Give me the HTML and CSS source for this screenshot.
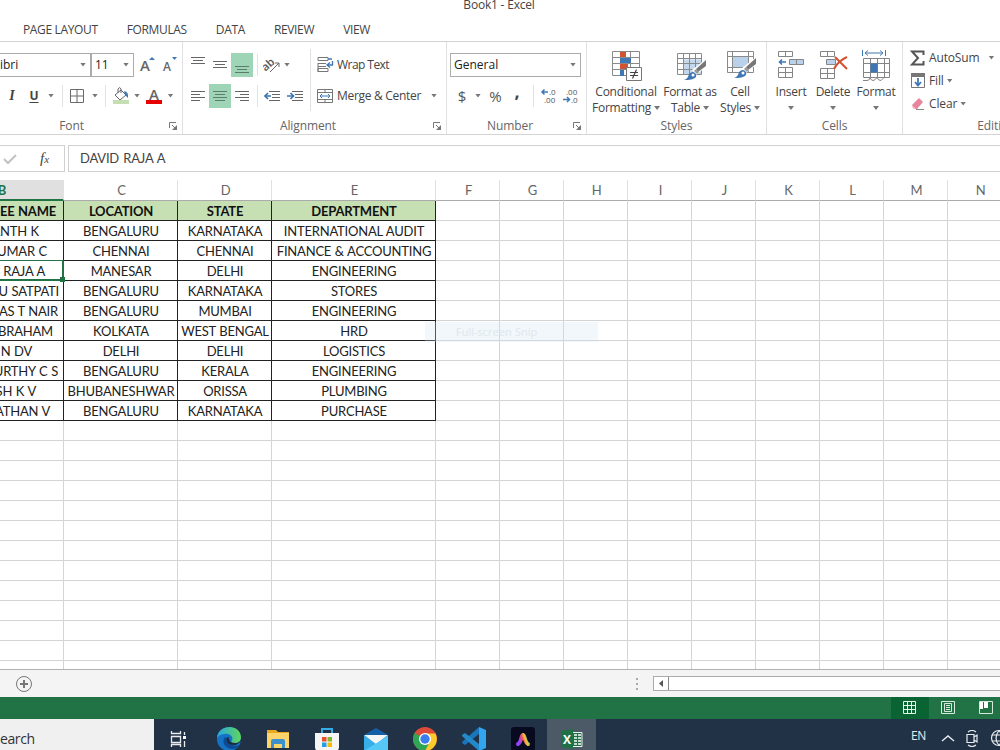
FILE: index.html
```html
<!doctype html>
<html lang="en">
  <head>
    <meta charset="utf-8">
    <title>Book1 - Excel</title>
    <link rel="stylesheet" href="styles.css">
  </head>
  <body>
    <header class="top">
      <div class="title">Book1 - Excel</div>
      <nav class="tabs">
        <span>PAGE LAYOUT</span>
        <span>FORMULAS</span>
        <span>DATA</span>
        <span>REVIEW</span>
        <span>VIEW</span>
      </nav>
    </header>

    <div class="ribbon">
      <section class="group font">
        <div class="row font-1">
          <div class="box font-name"><span>ibri</span><i class="arrow"></i></div>
          <div class="box"><span>11</span><i class="arrow"></i></div>
          <svg width="18" height="20"><text x="2" y="16" class="letter" font-size="15">A</text><path d="M11 5l3-3 3 3z" fill="#3f77b5"/></svg>
          <svg width="18" height="20"><text x="3" y="16" class="letter" font-size="12">A</text><path d="M12 2h5l-2.500 3z" fill="#3f77b5"/></svg>
        </div>
        <div class="row font-2">
          <b class="italic">I</b>
          <b class="under">U</b>
          <i class="arrow"></i>
          <i class="sep"></i>
          <svg width="14" height="14" fill="none" stroke="#6a6a6a"><path d="M.5.5h13v13H.5zM7 .5v13M.5 7h13"/></svg>
          <i class="arrow"></i>
          <i class="sep"></i>
          <svg width="18" height="18"><path d="M1 13h16v4H1z" fill="#c5dfb3"/><path d="M3 8l6-5 5 5-6 5zM6 6V2q2-3 3 0v4" fill="#fff" stroke="#666"/><path d="M12 4q5 1 4 7l-3-3z" fill="#3f77b5"/></svg>
          <i class="arrow"></i>
          <svg width="18" height="18"><text x="4" y="13" class="letter" font-size="15">A</text><path d="M1 13h16v4H1z" fill="#e60000"/></svg>
          <i class="arrow"></i>
        </div>
        <div class="caption"><span>Font</span><svg class="launch" width="9" height="9"><path d="M.5 6V.5H7M3 3l4 4" fill="none" stroke="#777"/><path d="M8 3v5H3z" fill="#777"/></svg></div>
      </section>

      <section class="group align">
        <div class="row align-1">
          <svg width="14" height="22" stroke="#666"><path d="M0 3.500h14M2 6.500h10M0 9.500h14"/></svg>
          <svg width="14" height="22" stroke="#666"><path d="M0 7.500h14M2 10.500h10M0 13.500h14"/></svg>
          <span class="on"><svg width="14" height="22" stroke="#5d7d6c"><path d="M0 12.500h14M2 15.500h10M0 18.500h14"/></svg></span>
          <i class="sep"></i>
          <svg width="18" height="18"><text x="-1" y="11" transform="rotate(-42 7 9)" font-size="11" font-family="Open Sans" font-weight="600" fill="#555">ab</text><path d="M7 16L16 7M12 7h4v4" fill="none" stroke="#666"/></svg>
          <i class="arrow"></i>
          <i></i>
          <i class="sep tall"></i>
          <svg width="17" height="17" fill="none" stroke="#777"><path d="M1 1.500h10v3H1zM1 7.500h8M1 10.500h8M1 15.500h10v-3H1zM1 7v9"/><path d="M15.500 5v4H10M13 6.500L10 9l3 2.500M11 3h4" stroke="#3f77b5" stroke-width="1.300"/></svg>
          <span class="txt wrap">Wrap Text</span>
        </div>
        <div class="row align-2">
          <svg width="14" height="14" stroke="#666"><path d="M0 2.500h14M0 5.500h9M0 8.500h14M0 11.500h9"/></svg>
          <span class="on"><svg width="14" height="14" stroke="#5d7d6c"><path d="M0 2.500h14M2 5.500h10M0 8.500h14M2 11.500h10"/></svg></span>
          <svg width="14" height="14" stroke="#666"><path d="M0 2.500h14M5 5.500h9M0 8.500h14M5 11.500h9"/></svg>
          <i class="sep"></i>
          <svg width="17" height="14" fill="none"><path d="M5 2.500h11M8 5.500h8M8 8.500h8M5 11.500h11" stroke="#666"/><path d="M7 7H1M4 4L1 7l3 3" stroke="#3f77b5" stroke-width="1.700"/></svg>
          <svg width="17" height="14" fill="none"><path d="M5 2.500h11M8 5.500h8M8 8.500h8M5 11.500h11" stroke="#666"/><path d="M0 7h6M3.500 4l3 3-3 3" stroke="#3f77b5" stroke-width="1.700"/></svg>
          <i class="sep tall"></i>
          <svg width="16" height="16" fill="none" stroke="#777"><path d="M.5 1.500h15v13H.5zM.5 4.500h15M.5 11.500h15M8 1v3M8 12v3"/><path d="M3 8h10M5 6L3 8l2 2M11 6l2 2-2 2" stroke="#3f77b5"/></svg>
          <span class="txt merge">Merge &amp; Center</span>
          <i class="arrow"></i>
        </div>
        <div class="caption"><span>Alignment</span><svg class="launch" width="9" height="9"><path d="M.5 6V.5H7M3 3l4 4" fill="none" stroke="#777"/><path d="M8 3v5H3z" fill="#777"/></svg></div>
      </section>

      <section class="group number">
        <div class="row number-1">
          <div class="box"><span>General</span><i class="arrow"></i></div>
        </div>
        <div class="row number-2">
          <span class="sym">$</span>
          <i class="arrow"></i>
          <span class="sym">%</span>
          <b class="comma">,</b>
          <i class="sep"></i>
          <svg width="15" height="16" class="dec"><text x="8" y="7">.0</text><text x="3" y="15">.00</text><path d="M7 4H1M3.500 1.500L1 4l2.500 2.500" fill="none" stroke="#3f77b5" stroke-width="1.500"/></svg>
          <svg width="15" height="16" class="dec"><text x="3" y="7">.00</text><text x="8" y="15">.0</text><path d="M0 11.500h6M4 9l2.500 2.500L4 14" fill="none" stroke="#3f77b5" stroke-width="1.500"/></svg>
        </div>
        <div class="caption"><span>Number</span><svg class="launch" width="9" height="9"><path d="M.5 6V.5H7M3 3l4 4" fill="none" stroke="#777"/><path d="M8 3v5H3z" fill="#777"/></svg></div>
      </section>

      <section class="group styles">
        <div class="bigs">
          <div class="big">
            <svg width="32" height="32"><g stroke="#8a8a8a" fill="#fff"><path d="M2.500 2.500h27v24h-27zM2.500 8.500h27M2.500 14.500h27M2.500 20.500h27M10.500 2.500v24M20.500 2.500v24"/></g><path d="M10 3h6v5h-6zM10 15h8v5h-8z" fill="#d35230"/><path d="M10 9h11v5H10zM10 21h4v6h-4z" fill="#3f77b5"/><path d="M16.500 18.500h15v13h-15z" fill="#fff" stroke="#777"/><path d="M20 23.500h8M20 26.500h8M26.500 20.500l-4 9" stroke="#444" stroke-width="1.200"/></svg>
            <span>Conditional<br>Formatting<i class="arrow"></i></span>
          </div>
          <div class="big">
            <svg width="32" height="32"><path d="M3.500 4.500h24v21h-24z" fill="#fff"/><path d="M9.500 10.500h18v15h-18z" fill="#c3d8ed"/><path d="M3.500 4.500h24v21h-24zM3.500 9.500h24M3.500 14.500h24M3.500 20.500h24M9.500 4v22M15.500 4v22M21.500 4v22" fill="none" stroke="#8a8a8a"/><path d="M32 10v8L22 26l-4-5z" fill="#fff"/><path d="M32 11v6l-8 6-2-3z" fill="#777"/><path d="M22 20l3 3-2 2-3-3z" fill="#999"/><path d="M10 31q4-1 5-6 4-4 7 0 2 6-12 6z" fill="#3f77b5"/><circle cx="19" cy="26" r="1.500" fill="#fff"/></svg>
            <span>Format as<br>Table<i class="arrow"></i></span>
          </div>
          <div class="big">
            <svg width="32" height="32"><path d="M3.500 2.500h26v21h-26z" fill="#fff"/><path d="M8 8h16v11H8z" fill="#b9d1ea"/><path d="M3.500 2.500h26v21h-26zM3.500 7.500h26M3.500 18.500h26M8.500 2v22M24.500 2v22" fill="none" stroke="#8a8a8a"/><path d="M32 8v8L22 24l-4-5z" fill="#fff"/><path d="M32 9v6l-8 6-2-3z" fill="#777"/><path d="M22 18l3 3-2 2-3-3z" fill="#999"/><path d="M10 29q4-1 5-6 4-4 7 0 2 6-12 6z" fill="#3f77b5"/><circle cx="19" cy="24" r="1.500" fill="#fff"/></svg>
            <span>Cell<br>Styles<i class="arrow"></i></span>
          </div>
        </div>
        <div class="caption"><span>Styles</span></div>
      </section>

      <section class="group cells">
        <div class="bigs">
          <div class="big">
            <svg width="28" height="32" fill="#fff" stroke="#858585"><path d="M1.500 2.500h14v5h-14zM8.500 2v6M1.500 18.500h14v10h-14zM1.500 23.500h14M8.500 18v10"/><path d="M12.500 10.500h14v5h-14zM19.500 10v6" fill="#b9d1ea"/><path d="M9 13H3M5 10.500L2.500 13 5 15.500" fill="none" stroke="#3f77b5" stroke-width="1.600"/></svg>
            <span>Insert<br><i class="arrow"></i></span>
          </div>
          <div class="big">
            <svg width="30" height="32" fill="#fff" stroke="#858585"><path d="M2.500 2.500h14v5h-14zM9.500 2v6M2.500 19.500h14v10h-14zM2.500 24.500h14M9.500 19v10"/><path d="M8.500 10.500h9v5h-9z" fill="#b9d1ea"/><path d="M17 8l12 12M29 8Q20 12 16 20" fill="none" stroke="#d35230" stroke-width="2"/></svg>
            <span>Delete<br><i class="arrow"></i></span>
          </div>
          <div class="big">
            <svg width="30" height="34" fill="#fff" stroke="#858585"><path d="M2.500 9.500h26v19h-26zM2.500 14.500h26M2.500 23.500h26M9.500 9v20M16.500 9v20M23.500 9v20M2 31.500h4q3 0 3-3 1 3 3 3t4-3q1 3 4 3l3-3"/><path d="M9.500 14.500h7v9h-7z" fill="#3f77b5" stroke="none"/><path d="M1.500 1v6M24.500 1v6M4 4h18M7 1.500L4 4l3 2.500M19 1.500L22 4l-3 2.500" fill="none" stroke="#3f77b5"/></svg>
            <span>Format<br><i class="arrow"></i></span>
          </div>
        </div>
        <div class="caption"><span>Cells</span></div>
      </section>

      <section class="group editing">
        <div class="edit"><svg width="16" height="16"><path d="M13.500 5V1.500H2L8 8l-6 6.500h11.500V11" fill="none" stroke="#555" stroke-width="2"/></svg><span>AutoSum</span><i class="arrow far"></i></div>
        <div class="edit"><svg width="16" height="16"><path d="M1.500 1.500h13v13h-13z" fill="#fff" stroke="#777"/><path d="M1 0h14v4H1z" fill="#777"/><path d="M8 5v7M5 9l3 3.500L11 9" fill="none" stroke="#3f77b5" stroke-width="1.800"/></svg><span>Fill</span><i class="arrow"></i></div>
        <div class="edit"><svg width="16" height="16"><path d="M2 9l7-7 4 4-6 7H4z" fill="#e8849b"/><path d="M2 9l4 4H4L2 11z" fill="#f4bfca"/><path d="M6 13.500h8" stroke="#888"/></svg><span>Clear</span><i class="arrow"></i></div>
        <div class="caption"><span>Editing</span></div>
      </section>
    </div>

    <div class="formula">
      <div class="fx"><svg width="14" height="12"><path d="M1 6l4 4 8-8" fill="none" stroke="#c2c2c2" stroke-width="2"/></svg><em>f<small>x</small></em></div>
      <div class="value">DAVID RAJA A</div>
    </div>

    <main class="sheet" id="sheet">
      <div class="snip">Full-screen Snip</div>
    </main>

    <div class="sheetbar">
      <svg width="18" height="18" fill="none" stroke="#777"><circle cx="9" cy="9" r="7.500"/><path d="M9 5v8M5 9h8" stroke-width="2"/></svg>
      <div class="scroll">
        <svg width="4" height="14" fill="#aaa"><path d="M1 1h2v2H1zM1 6h2v2H1zM1 11h2v2H1z"/></svg>
        <div class="track"><svg width="15" height="13"><path d="M9 3v7L5 6.500z" fill="#555"/></svg></div>
      </div>
    </div>

    <div class="status">
      <span class="view active"><svg width="14" height="14" fill="none" stroke="#e4f5ea"><path d="M.5.5h12v12H.5zM4.500.5v12M8.500.5v12M.5 4.500h12M.5 8.500h12"/></svg></span>
      <span class="view"><svg width="14" height="14" fill="none" stroke="#d5eadd"><path d="M.5.5h13v12H.5zM3.500 2.500h7v8h-7zM5 4.500h4M5 6.500h4M5 8.500h4"/></svg></span>
      <span class="view"><svg width="14" height="14" fill="none" stroke="#d5eadd"><path d="M.5.5h13v12H.5z"/><path d="M1 1h3v7H1zM5 1h4v6H5z" fill="#fff" stroke="none"/></svg></span>
    </div>

    <footer class="taskbar">
      <div class="search">earch</div>
      <div class="apps">
        <span class="app"><svg width="18" height="16" fill="none" stroke="#e8ecef" stroke-width="1.300"><path d="M1.500 0v2.500h9V0M1.500 5.500h9v6h-9zM1.500 16v-2.500h9V16M14.500 1v3M14.500 10v6"/><path d="M13 5h3v3h-3z" fill="#fff" stroke="none"/></svg></span>
        <span class="app"><svg width="24" height="24"><defs><linearGradient id="eg" x1="0" x2="1"><stop offset="0" stop-color="#2aa5e0"/><stop offset="1" stop-color="#5fd65c"/></linearGradient></defs><circle cx="12" cy="12" r="12" fill="#1573c6"/><path d="M0 11C1-3 24-4 24 11c0 6-8 7-10 4 4-4-1-9-6-8-4 0-7 2-8 4z" fill="url(#eg)"/><path d="M8 10c-4 5 0 12 8 12 3 0 6-3 6-4-5 2-11-1-10-6z" fill="#0d4b93"/><path d="M14 15c-3-2-1-5-3-5-2 1-2 5 1 7 4 2 8 1 10-1l2-2v-3c0 5-6 6-10 4z" fill="#1d2f43"/></svg></span>
        <span class="app"><svg width="22" height="22"><path d="M0 2h9l2 2h11v16H0z" fill="#e9a820"/><path d="M0 5h22v15H0z" fill="#fbd46b"/><path d="M4 20v-7q0-2 2-2h10q2 0 2 2v7h-3v-4H7v4z" fill="#3c8fcd"/></svg></span>
        <span class="app"><svg width="24" height="24"><path d="M7 7V2h10v5" fill="none" stroke="#35ace6" stroke-width="2"/><path d="M0 6h24v14q0 4-4 4H4q-4 0-4-4z" fill="#f5f5f5"/><path d="M7 10h4.500v4.500H7z" fill="#e94f2d"/><path d="M12.500 10H17v4.500h-4.500z" fill="#7db928"/><path d="M7 15.500h4.500V20H7z" fill="#1f9fe4"/><path d="M12.500 15.500H17V20h-4.500z" fill="#f8b900"/></svg></span>
        <span class="app"><svg width="24" height="24"><path d="M0 8l12-7 12 7v14H0z" fill="#155fa8"/><path d="M0 8h24L12 18z" fill="#f5f5f5"/><path d="M0 8l12 9L24 8v16H0z" fill="#38aee9"/><path d="M0 24L24 9v15z" fill="#55c8f5"/></svg></span>
        <span class="app"><svg width="24" height="24"><circle cx="12" cy="12" r="12" fill="#dd4b38"/><path d="M1.600 6A12 12 0 0 0 12 24l5-9-5-3z" fill="#2fa653"/><path d="M22.500 6.500H12l5 8-5 9.500A12 12 0 0 0 22.500 6.500z" fill="#fbcb2c"/><circle cx="12" cy="12" r="6" fill="#fff"/><circle cx="12" cy="12" r="4.700" fill="#3b7ded"/></svg></span>
        <span class="app"><svg width="24" height="24"><path d="M17 0v7L3 18l-3-2v-1z" fill="#1976bd"/><path d="M0 8l3-2 14 11v7L0 9z" fill="#2489ca"/><path d="M17 0l7 3v18l-7 3z" fill="#32a5ee"/></svg></span>
        <span class="app"><svg width="24" height="24"><defs><linearGradient id="ag" x1="0" x2="1" y1=".3" y2="0"><stop offset="0" stop-color="#8b45f5"/><stop offset=".35" stop-color="#ee4775"/><stop offset=".65" stop-color="#f8c336"/><stop offset="1" stop-color="#43b96c"/></linearGradient></defs><rect width="24" height="24" rx="3" fill="#080b20"/><path d="M7 17q2-1 3.500-6.500 1.500-5 3 0Q15 16 17 17" fill="none" stroke="url(#ag)" stroke-width="4" stroke-linecap="round"/></svg></span>
        <span class="app open"><svg width="22" height="20"><path d="M10 3.500h11v14H10z" fill="#1e7145" stroke="#e8f1ec"/><path d="M13 6h7M13 9h7M13 12h7M13 15h7" stroke="#fff" stroke-width="1.500"/><path d="M16.500 4v13" stroke="#1e7145"/><path d="M0 2l12-2v20L0 18z" fill="#1e7145"/><text x="2" y="15" font-size="12" font-weight="700" font-family="Open Sans" fill="#fff">X</text></svg></span>
      </div>
      <div class="tray">
        <span>EN</span>
        <svg width="14" height="8" fill="none" stroke="#e8ecef" stroke-width="1.400"><path d="M1 7l6-5 6 5"/></svg>
        <svg width="13" height="17" fill="none" stroke="#e8ecef" stroke-width="1.200"><path d="M1 4.500h7v8H1zM8 7l3-2v7l-3-2M2 2q4-3 8 0M2 15q4 3 8 0"/></svg>
        <svg width="18" height="18" fill="none" stroke="#e8ecef" stroke-width="1.200"><circle cx="9" cy="9" r="7.500"/><path d="M9 1.500Q3 9 9 16.500M9 1.500Q15 9 9 16.500M2 6h14M2 12h14"/></svg>
      </div>
    </footer>

    <script>
      // first column: text, then the space left of the column edge
      const rows = [
        [['EE NAME', 7], 'LOCATION', 'STATE', 'DEPARTMENT'],
        [['ANTH K', 24], 'BENGALURU', 'KARNATAKA', 'INTERNATIONAL AUDIT'],
        [['UMAR C', 16], 'CHENNAI', 'CHENNAI', 'FINANCE & ACCOUNTING'],
        [['RAJA A', 17], 'MANESAR', 'DELHI', 'ENGINEERING'],
        [['U SATPATI', 4], 'BENGALURU', 'KARNATAKA', 'STORES'],
        [['AS T NAIR', 5], 'BENGALURU', 'MUMBAI', 'ENGINEERING'],
        [['BRAHAM', 10], 'KOLKATA', 'WEST BENGAL', 'HRD'],
        [['N DV', 31], 'DELHI', 'DELHI', 'LOGISTICS'],
        [['URTHY C S', 5], 'BENGALURU', 'KERALA', 'ENGINEERING'],
        [['SH K V', 27], 'BHUBANESHWAR', 'ORISSA', 'PLUMBING'],
        [['ATHAN V', 13], 'BENGALURU', 'KARNATAKA', 'PURCHASE']
      ];
      const sheet = document.getElementById('sheet');
      function cell(cls, text, pad) {
        const div = document.createElement('div');
        div.className = cls;
        div.textContent = text || '';
        if (pad !== undefined) {
          div.style.paddingRight = pad + 'px';
        }
        sheet.appendChild(div);
      }
      'BCDEFGHIJKLMN'.split('').forEach((c) => {
        cell(c === 'B' ? 'col current' : 'col', c);
      });
      for (let r = 0; r < 24; r++) {
        for (let c = 0; c < 13; c++) {
          const data = rows[r] && rows[r][c];
          let cls = 'cell';
          if (data) cls += r === 0 ? ' data head' : ' data';
          if (data && c === 0) {
            cls += ' first';
            if (r === 3) cls += ' selected';
            if (r === 2) cls += ' above';
            cell(cls, data[0], data[1]);
          } else {
            cell(cls, data);
          }
        }
      }
    </script>
  </body>
</html>
```
FILE: styles.css
```css
* {
  box-sizing: border-box;
}
body {
  margin: 0;
  width: 1000px;
  height: 750px;
  overflow: hidden;
  background: #fff;
  color: #444;
  font-family: "Open Sans", "Noto Sans", sans-serif;
  font-size: 12px;
}
svg {
  display: block;
  flex: none;
}
.top {
  display: flow-root;
  height: 42px;
  border-bottom: 1px solid #d0d3d4;
}
.title {
  height: 20px;
  margin-top: -5px;
  text-align: center;
  line-height: 20px;
  padding-right: 2px;
  letter-spacing: -0.2px;
}
.tabs {
  display: flex;
  gap: 29px;
  padding-left: 23px;
  height: 30px;
  line-height: 30px;
  letter-spacing: -0.35px;
}
.ribbon {
  display: flex;
  height: 93px;
  overflow: hidden;
  border-bottom: 1px solid #d4d4d4;
}
.group {
  flex: none;
  display: flex;
  flex-direction: column;
  padding-top: 10px;
  border-right: 1px solid #e1e1e1;
}
.font { width: 183px; }
.align { width: 264px; }
.number { width: 140px; }
.styles { width: 180px; }
.cells { width: 136px; }
.editing { width: 187px; padding-top: 4px; }
.row {
  display: grid;
  grid-template-rows: 25px;
  height: 25px;
  margin-bottom: 6px;
  align-items: center;
  justify-items: center;
}
.font-1 { grid-template-columns: 91px 43px 26px 18px; }
.font-2 { grid-template-columns: 24px 20px 14px 8px 22px 14px 7px 23px 10px 24px 9px; }
.align .row { padding-left: 4px; }
.align-1 { grid-template-columns: 22px 22px 22px 8px 22px 8px 15px 8px 22px auto 60px; }
.align-2 { grid-template-columns: 22px 22px 22px 8px 23px 22px 8px 22px 86px 24px; }
.number-1 { grid-template-columns: 131px; padding-left: 3px; }
.number-2 { grid-template-columns: 22px 10px 25px 18px 14px 16px 28px; padding-left: 4px; }
.box {
  width: 100%;
  height: 24px;
  border: 1px solid #ababab;
  display: flex;
  align-items: center;
  justify-content: space-between;
  padding: 0 4px 0 3px;
  color: #222;
}
.font-name {
  border-left: none;
  padding-left: 0;
}
.arrow {
  display: inline-block;
  flex: none;
  width: 6px;
  height: 4px;
  background: #777;
  clip-path: polygon(0 0, 100% 0, 50% 100%);
}
.sep {
  width: 1px;
  height: 22px;
  background: #e1e1e1;
}
.tall {
  height: 31px;
}
.on {
  width: 22px;
  height: 24px;
  background: #9fd5b7;
  display: flex;
  align-items: center;
  justify-content: center;
}
.letter {
  font-family: "Open Sans", sans-serif;
  font-weight: 600;
  fill: #666;
}
.italic {
  font-family: "Liberation Serif", serif;
  font-style: italic;
  font-size: 14px;
}
.under {
  font-size: 12px;
  text-decoration: underline;
  text-underline-offset: 2px;
}
.txt {
  justify-self: start;
  padding-left: 1px;
  white-space: nowrap;
}
.wrap { letter-spacing: -0.55px; }
.merge { letter-spacing: -0.3px; }
.sym {
  font-size: 15px;
  color: #555;
}
.comma {
  font-size: 18px;
  line-height: 10px;
  padding-bottom: 9px;
}
.dec {
  font-size: 8px;
  fill: #555;
  overflow: visible;
}
.caption {
  display: flex;
  align-items: center;
  height: 18px;
  margin-top: auto;
  color: #666;
  letter-spacing: -0.1px;
}
.caption span {
  flex: 1;
  text-align: center;
}
.font .caption { margin-left: -26px; }
.launch {
  margin-right: 4px;
  margin-top: 2px;
}
.bigs {
  display: grid;
  height: 66px;
}
.styles .bigs { grid-template-columns: 78px 50px 50px; }
.cells .bigs { grid-template-columns: 48px 36px 50px; }
.big {
  display: flex;
  flex-direction: column;
  align-items: center;
  justify-self: center;
  margin-top: -3px;
  line-height: 16px;
  text-align: center;
  white-space: nowrap;
}
.big svg {
  height: 35px;
}
.big span {
  letter-spacing: -0.25px;
}
.big .arrow {
  margin-left: 3px;
  vertical-align: 2px;
}
.cells .big .arrow { margin-left: 0; }
.edit {
  display: flex;
  align-items: center;
  height: 23px;
  padding-left: 7px;
}
.edit span {
  margin-left: 3px;
  letter-spacing: -0.15px;
}
.edit .arrow { margin-left: 3px; }
.edit .far { margin-left: 9px; }
.formula {
  display: flex;
  gap: 3px;
  height: 27px;
  margin-top: 10px;
}
.fx {
  width: 65px;
  border: 1px solid #d0d0d0;
  border-left: none;
  display: flex;
  align-items: center;
  padding-left: 3px;
}
.fx em {
  font-family: "Liberation Serif", serif;
  font-size: 15px;
  margin-left: 23px;
}
.fx small { font-size: 11px; }
.value {
  flex: 1;
  border: 1px solid #d0d0d0;
  border-right: none;
  padding-left: 11px;
  line-height: 25px;
  font-family: Lato, sans-serif;
  font-size: 13px;
  letter-spacing: -0.2px;
  word-spacing: 1px;
}
.sheet {
  position: relative;
  display: grid;
  grid-template-columns: 64px 114px 94px 164px repeat(9, 64px);
  grid-template-rows: 21px;
  grid-auto-rows: 20px;
  height: 490px;
  margin-top: 8px;
  overflow: hidden;
  border-bottom: 1px solid #b0b0b0;
  font-family: Lato, sans-serif;
  font-size: 13px;
  letter-spacing: -0.2px;
  word-spacing: 0.5px;
}
.col {
  display: flex;
  align-items: center;
  justify-content: center;
  color: #666;
  padding-left: 2px;
  border-bottom: 1px solid #ababab;
  border-right: 1px solid #e1e1e1;
}
.current {
  background: #e0e0e0;
  color: #217346;
  font-weight: bold;
  justify-content: flex-end;
  padding-right: 57px;
  border-bottom: 2px solid #217346;
}
.cell {
  display: flex;
  justify-content: center;
  align-items: center;
  white-space: nowrap;
  padding-left: 1px;
  border-right: 1px solid #d4d4d4;
  border-bottom: 1px solid #d4d4d4;
}
.data {
  color: #222;
  border-color: #222;
}
.head {
  background: #c6e0b4;
  color: #111;
  font-weight: bold;
}
.first { justify-content: flex-end; }
.above { border-bottom-color: #217346; }
.selected {
  position: relative;
  padding-top: 1px;
  border-right: 2px solid #217346;
  border-bottom: 2px solid #217346;
}
.selected::after {
  content: "";
  position: absolute;
  right: -3px;
  bottom: -3px;
  width: 5px;
  height: 5px;
  background: #217346;
}
.snip {
  position: absolute;
  left: 425px;
  top: 142px;
  width: 173px;
  height: 20px;
  padding-left: 31px;
  line-height: 19px;
  background: rgba(205, 228, 242, 0.28);
  color: #e0e6ea;
  font-family: "Open Sans", sans-serif;
  font-size: 11px;
  letter-spacing: 0;
}
.sheetbar {
  height: 27px;
  background: #f4f4f4;
  display: flex;
  align-items: center;
  justify-content: space-between;
  padding-left: 15px;
}
.scroll {
  display: flex;
  align-items: center;
  gap: 14px;
}
.track {
  width: 347px;
  height: 15px;
  border: 1px solid #ababab;
  border-right: none;
  background: #fff;
}
.track svg { border-right: 1px solid #888; }
.status {
  height: 22px;
  background: #217346;
  display: flex;
  justify-content: flex-end;
}
.view {
  width: 38px;
  display: flex;
  align-items: center;
  justify-content: center;
}
.status .view:last-child {
  width: 33px;
  padding-left: 5px;
}
.active { background: #0a6332; }
.taskbar {
  display: flex;
  height: 31px;
  background: #213247;
  overflow: hidden;
}
.search {
  width: 154px;
  background: #f0f0f0;
  color: #333;
  font-size: 14px;
  line-height: 40px;
  letter-spacing: -0.4px;
}
.apps { display: flex; }
.app {
  width: 49px;
  height: 40px;
  display: flex;
  align-items: center;
  justify-content: center;
}
.app:first-child {
  width: 50px;
}
.open { background: #4c5a68; }
.tray {
  margin-left: auto;
  display: flex;
  align-items: center;
  height: 38px;
  color: #e8ecef;
  gap: 11px;
  margin-right: -8px;
}
.tray span {
  margin-right: 4px;
  line-height: 34px;
  height: 38px;
  letter-spacing: -0.4px;
}
```
